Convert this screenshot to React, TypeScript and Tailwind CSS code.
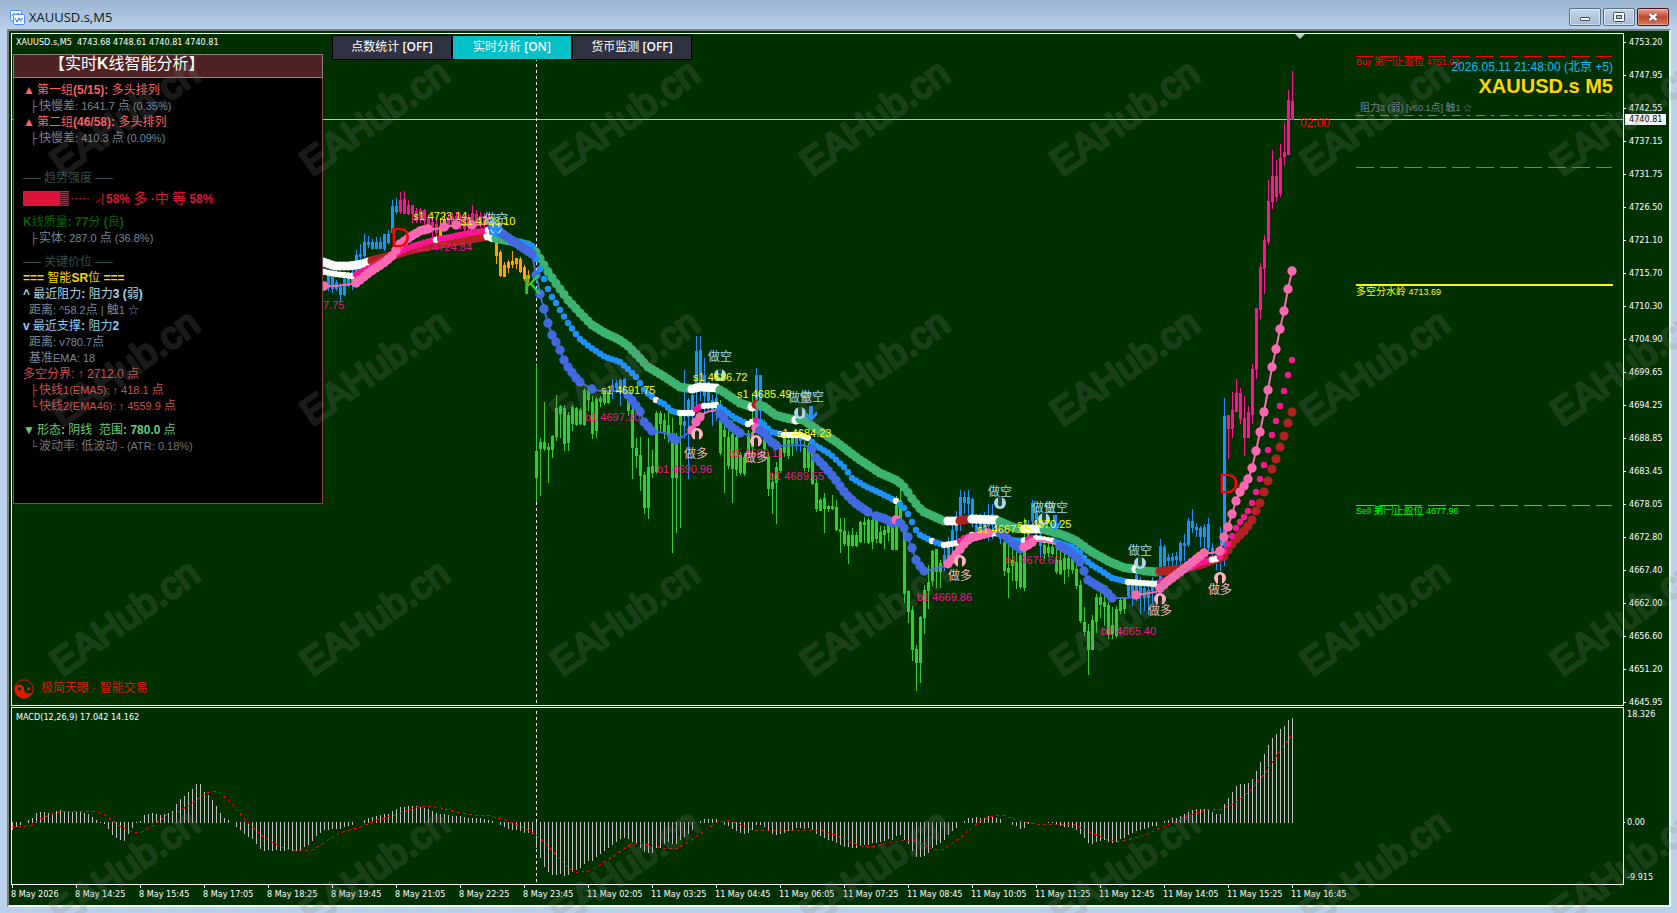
import React from 'react';

type Point = [number, number];
type Span = { to: number; color: string; dots?: boolean };
type Candle = [number, number, number, number];

const WHITE = '#ffffff';
const BLUE = '#1e90ff';
const PINK = '#ff1493';
const GREEN = '#32cd32';
const ORANGE = '#ffa500';
const SEA = '#3cb371';
const BRICK = '#b22222';
const ROYAL = '#4169e1';
const HOT = '#ff69b4';

const STEP = 4;
const ORIGIN_X = 12;

// [high, body top, body bottom, low], one bar every 4px
const candleRuns: { start: number; color: string; bars: Candle[] }[] = [
  {
    start: 79,
    color: BLUE,
    bars: [
      [275, 275, 287, 290], [277, 277, 288, 292], [280, 282, 288, 290], [283, 287, 294, 301], [276, 279, 294, 295],
      [274, 275, 285, 286], [270, 272, 282, 289], [250, 255, 280, 281], [244, 254, 256, 265], [234, 242, 255, 257],
      [236, 242, 244, 247], [239, 242, 248, 249], [237, 242, 248, 248], [237, 242, 248, 248], [234, 234, 248, 250],
      [230, 234, 242, 243], [200, 206, 232, 233], [198, 206, 211, 213],
    ],
  },
  {
    start: 97,
    color: PINK,
    bars: [
      [192, 200, 211, 213], [191, 199, 213, 213], [200, 205, 213, 214], [205, 205, 213, 222], [208, 211, 220, 222],
      [208, 210, 217, 222], [209, 210, 220, 224], [214, 217, 225, 230], [218, 222, 231, 236], [220, 224, 232, 236],
    ],
  },
  { start: 107, color: ORANGE, bars: [[218, 228, 235, 236], [214, 219, 224, 228]] },
  {
    start: 109,
    color: PINK,
    bars: [
      [214, 218, 224, 228], [213, 217, 222, 227], [212, 216, 222, 226], [214, 218, 224, 228], [216, 220, 228, 232],
      [214, 218, 226, 231], [205, 213, 222, 228], [210, 214, 222, 226], [212, 216, 222, 226], [213, 216, 222, 226],
      [214, 218, 224, 230],
    ],
  },
  {
    start: 121,
    color: ORANGE,
    bars: [
      [238, 240, 255, 263], [250, 252, 275, 276], [262, 265, 276, 276], [260, 262, 267, 272], [251, 261, 264, 267],
      [258, 258, 263, 268], [257, 259, 271, 272], [265, 267, 278, 280], [270, 275, 278, 282],
    ],
  },
  {
    start: 131,
    color: GREEN,
    bars: [
      [365, 451, 477, 501], [438, 442, 448, 495], [402, 442, 448, 450], [443, 447, 449, 482], [435, 436, 449, 457],
      [395, 408, 436, 440], [405, 406, 413, 437], [405, 408, 443, 450], [412, 415, 442, 450], [405, 407, 423, 430],
      [407, 408, 424, 425], [408, 410, 423, 424], [388, 390, 424, 425], [388, 390, 399, 410], [396, 402, 433, 438],
      [397, 399, 430, 437], [396, 398, 401, 406], [391, 392, 402, 404], [391, 392, 402, 403],
    ],
  },
  { start: 150, color: BLUE, bars: [[379, 385, 390, 398], [380, 383, 387, 392], [379, 380, 390, 405], [378, 379, 390, 397]] },
  {
    start: 154,
    color: GREEN,
    bars: [
      [392, 400, 410, 415], [408, 410, 447, 478], [438, 448, 455, 467], [437, 455, 475, 490], [472, 475, 507, 513],
      [438, 467, 507, 518], [450, 466, 472, 477], [411, 413, 471, 473], [411, 413, 423, 430], [413, 420, 432, 438],
      [410, 425, 435, 442], [418, 437, 477, 552], [433, 440, 477, 532], [412, 414, 424, 527],
    ],
  },
  {
    start: 168,
    color: BLUE,
    bars: [
      [370, 421, 425, 438], [398, 400, 416, 478], [385, 395, 410, 420], [336, 351, 390, 405], [336, 350, 385, 400],
      [358, 375, 395, 412], [381, 382, 400, 410], [395, 400, 410, 425], [393, 398, 410, 420],
    ],
  },
  {
    start: 177,
    color: GREEN,
    bars: [
      [400, 420, 452, 454], [425, 430, 436, 492], [430, 437, 465, 468], [420, 434, 468, 502], [430, 437, 469, 475],
      [452, 455, 472, 474], [453, 457, 473, 475], [430, 433, 450, 457], [393, 432, 446, 452],
    ],
  },
  { start: 186, color: BLUE, bars: [[368, 375, 418, 420], [375, 375, 410, 425]] },
  {
    start: 188,
    color: GREEN,
    bars: [
      [420, 430, 448, 458], [453, 457, 488, 495], [473, 482, 488, 513], [462, 467, 482, 523], [445, 448, 470, 472],
      [437, 438, 452, 456], [436, 440, 455, 458], [435, 438, 443, 455],
    ],
  },
  { start: 196, color: BLUE, bars: [[433, 437, 443, 450], [430, 434, 440, 451]] },
  {
    start: 198,
    color: GREEN,
    bars: [
      [440, 448, 467, 470], [443, 447, 467, 471], [450, 452, 483, 484], [476, 483, 508, 511], [498, 500, 510, 510],
      [493, 498, 508, 532], [505, 506, 508, 511], [495, 506, 508, 509], [500, 507, 529, 530], [518, 529, 531, 552],
      [518, 531, 543, 545], [531, 535, 545, 563], [528, 535, 545, 546], [532, 535, 545, 546], [521, 522, 541, 542],
      [517, 522, 524, 542], [518, 520, 542, 543], [519, 520, 541, 548], [519, 520, 538, 542], [526, 532, 542, 543],
      [526, 530, 534, 548], [521, 522, 532, 540], [519, 522, 549, 549], [496, 505, 549, 549], [488, 500, 520, 525],
      [521, 525, 593, 602], [590, 591, 611, 622], [606, 610, 649, 660], [645, 649, 662, 690], [616, 617, 662, 682],
      [585, 590, 617, 633], [565, 582, 590, 608], [550, 551, 580, 585], [549, 549, 571, 587], [560, 563, 571, 587],
    ],
  },
  {
    start: 233,
    color: BLUE,
    bars: [
      [546, 555, 563, 570], [537, 546, 560, 563], [525, 530, 545, 555], [511, 520, 530, 545], [490, 497, 520, 530],
      [491, 497, 502, 513], [490, 497, 503, 515], [498, 499, 522, 526], [520, 525, 530, 537], [514, 519, 530, 535],
      [512, 520, 530, 538], [504, 516, 525, 540], [504, 514, 524, 538], [515, 520, 530, 535], [524, 530, 538, 543],
    ],
  },
  {
    start: 248,
    color: GREEN,
    bars: [
      [540, 542, 570, 575], [545, 568, 572, 597], [548, 560, 565, 580], [552, 562, 580, 588], [552, 555, 586, 588],
      [518, 540, 587, 590],
    ],
  },
  { start: 254, color: BLUE, bars: [[520, 525, 537, 545], [500, 503, 520, 530], [505, 512, 525, 535], [525, 535, 545, 556]] },
  {
    start: 258,
    color: GREEN,
    bars: [
      [542, 545, 553, 558], [543, 547, 552, 556], [544, 547, 553, 554], [547, 560, 571, 573], [550, 560, 573, 574],
      [553, 558, 569, 583], [555, 558, 568, 576], [557, 559, 569, 573], [565, 569, 585, 588], [580, 585, 620, 622],
      [607, 622, 631, 635], [624, 631, 649, 674], [615, 620, 649, 649], [594, 597, 621, 632], [592, 597, 604, 617],
      [595, 602, 606, 625], [602, 605, 634, 638], [607, 625, 633, 638], [606, 609, 635, 637], [599, 600, 610, 613],
      [598, 599, 608, 613],
    ],
  },
  {
    start: 279,
    color: BLUE,
    bars: [
      [581, 583, 595, 598], [583, 585, 593, 605], [573, 575, 595, 600], [577, 580, 595, 613], [585, 588, 597, 610],
      [585, 590, 597, 614], [577, 580, 590, 603], [580, 583, 588, 600], [539, 546, 583, 590], [545, 547, 565, 570],
      [554, 557, 560, 570], [553, 557, 560, 568], [552, 556, 559, 570], [541, 543, 560, 566], [534, 543, 545, 560],
      [518, 521, 544, 546], [509, 521, 527, 532], [523, 527, 529, 536], [526, 528, 536, 546], [524, 527, 536, 550],
      [518, 524, 547, 553], [543, 548, 551, 556], [548, 553, 558, 569], [527, 550, 556, 570], [398, 416, 545, 565],
    ],
  },
  {
    start: 304,
    color: PINK,
    bars: [
      [415, 415, 428, 458], [392, 410, 428, 437], [379, 393, 411, 411], [388, 393, 418, 423], [396, 418, 437, 455],
      [406, 412, 437, 437], [364, 369, 414, 423], [308, 308, 369, 378], [263, 267, 309, 318], [235, 240, 268, 293],
      [180, 201, 241, 244], [150, 176, 201, 208], [160, 176, 196, 201], [144, 158, 193, 196], [123, 152, 156, 165],
      [90, 100, 154, 154], [71, 101, 119, 119],
    ],
  },
];

const slowLine: Point[] = [
  [320, 261], [335, 266], [350, 266], [362, 264], [374, 260], [390, 256], [410, 250], [430, 246], [460, 241], [488, 236],
  [493, 238], [510, 241], [528, 245], [536, 252], [541, 260], [550, 275], [560, 289], [568, 300], [580, 313], [592, 325],
  [605, 333], [618, 339], [627, 345], [637, 355], [648, 367], [665, 377], [680, 387], [692, 389], [700, 387], [716, 388],
  [722, 391], [740, 403], [752, 407], [757, 404], [765, 407], [775, 415], [790, 419], [796, 420], [802, 419], [815, 428],
  [835, 441], [860, 460], [880, 473], [898, 481], [905, 488], [913, 500], [922, 511], [935, 517], [944, 521], [958, 521],
  [970, 519], [997, 520], [1003, 523], [1015, 528], [1022, 529], [1042, 529], [1060, 534], [1075, 540], [1090, 551],
  [1110, 562], [1125, 568], [1136, 569], [1145, 571], [1157, 572], [1180, 569], [1200, 565], [1213, 560], [1220, 558],
  [1224, 556], [1232, 544], [1236, 539], [1240, 535], [1244, 531], [1248, 526], [1252, 520], [1256, 511], [1260, 503],
  [1264, 492], [1268, 481], [1272, 469], [1276, 459], [1280, 447], [1284, 436], [1288, 423], [1292, 412],
];

const slowSpans: Span[] = [
  { to: 369, color: WHITE }, { to: 487, color: BRICK }, { to: 493, color: WHITE }, { to: 690, color: SEA },
  { to: 718, color: WHITE }, { to: 749, color: SEA }, { to: 753, color: WHITE }, { to: 757, color: BRICK },
  { to: 793, color: SEA }, { to: 797, color: WHITE }, { to: 945, color: SEA }, { to: 957, color: WHITE },
  { to: 969, color: BRICK }, { to: 997, color: WHITE }, { to: 1021, color: SEA }, { to: 1041, color: WHITE },
  { to: 1133, color: SEA }, { to: 1137, color: WHITE }, { to: 1159, color: SEA }, { to: 1292, color: BRICK },
];

const midLine: Point[] = [
  [320, 271], [335, 274], [352, 276], [365, 270], [380, 262], [395, 254], [410, 247], [430, 241], [450, 237], [470, 233],
  [488, 230], [492, 232], [510, 239], [532, 246], [536, 259], [540, 269], [544, 279], [548, 289], [552, 297], [556, 303],
  [560, 310], [568, 323], [576, 334], [580, 339], [590, 347], [605, 357], [620, 362], [628, 369], [636, 377], [645, 391],
  [656, 400], [664, 404], [672, 411], [679, 413], [693, 413], [697, 408], [702, 406], [717, 405], [735, 418], [748, 424],
  [756, 420], [762, 423], [772, 432], [784, 435], [800, 435], [808, 438], [815, 445], [830, 454], [845, 468], [852, 478],
  [865, 486], [880, 493], [896, 501], [904, 508], [908, 514], [912, 522], [916, 530], [920, 535], [932, 541], [944, 545],
  [958, 543], [962, 539], [972, 535], [984, 534], [1000, 533], [1012, 540], [1022, 541], [1034, 538], [1054, 541],
  [1072, 547], [1080, 553], [1084, 558], [1090, 564], [1100, 570], [1112, 578], [1128, 582], [1157, 584], [1175, 575],
  [1190, 567], [1200, 563], [1210, 560], [1216, 559], [1220, 557], [1224, 551], [1228, 544], [1232, 536], [1236, 528],
  [1240, 522], [1244, 517], [1248, 511], [1252, 503], [1256, 492], [1260, 479], [1264, 465], [1268, 450], [1272, 435],
  [1276, 421], [1280, 406], [1284, 391], [1288, 375], [1292, 360],
];

const midSpans: Span[] = [
  { to: 353, color: WHITE }, { to: 433, color: PINK }, { to: 437, color: WHITE }, { to: 485, color: PINK },
  { to: 489, color: WHITE }, { to: 653, color: BLUE }, { to: 657, color: WHITE }, { to: 677, color: BLUE },
  { to: 693, color: WHITE }, { to: 701, color: PINK }, { to: 717, color: WHITE }, { to: 745, color: BLUE },
  { to: 753, color: WHITE }, { to: 757, color: PINK }, { to: 781, color: BLUE }, { to: 809, color: WHITE },
  { to: 893, color: BLUE }, { to: 897, color: WHITE }, { to: 929, color: BLUE }, { to: 933, color: WHITE },
  { to: 941, color: BLUE }, { to: 957, color: WHITE }, { to: 969, color: PINK }, { to: 973, color: WHITE },
  { to: 989, color: PINK }, { to: 1001, color: WHITE }, { to: 1021, color: BLUE }, { to: 1025, color: WHITE },
  { to: 1033, color: PINK }, { to: 1053, color: WHITE }, { to: 1125, color: BLUE }, { to: 1157, color: WHITE },
  { to: 1209, color: PINK }, { to: 1217, color: WHITE }, { to: 1292, color: PINK },
];

const fastLine: Point[] = [
  [320, 286], [336, 286], [352, 284], [356, 283], [370, 272], [385, 262], [392, 256], [400, 244], [410, 237], [420, 231],
  [427, 229], [436, 229], [444, 227], [456, 225], [472, 225], [488, 224], [496, 229], [510, 239], [520, 246], [532, 254],
  [536, 275], [540, 294], [544, 309], [548, 323], [552, 335], [556, 342], [560, 350], [564, 360], [568, 367], [576, 378],
  [580, 382], [592, 389], [600, 391], [620, 391], [628, 395], [634, 403], [641, 413], [644, 422], [652, 431], [666, 433],
  [676, 440], [684, 436], [692, 430], [696, 422], [700, 417], [706, 412], [717, 410], [724, 419], [730, 426], [740, 433],
  [752, 436], [756, 428], [764, 433], [770, 441], [777, 446], [805, 445], [812, 449], [815, 457], [825, 467], [835, 479],
  [845, 493], [855, 503], [868, 512], [876, 516], [886, 519], [892, 523], [897, 519], [904, 528], [908, 537], [912, 548],
  [916, 560], [920, 566], [924, 571], [935, 569], [946, 566], [955, 556], [964, 544], [970, 538], [988, 533], [996, 531],
  [1004, 535], [1012, 543], [1020, 549], [1028, 545], [1034, 541], [1045, 541], [1058, 545], [1072, 553], [1080, 562],
  [1084, 571], [1088, 580], [1096, 585], [1105, 590], [1112, 598], [1128, 598], [1136, 595], [1156, 592], [1168, 581],
  [1180, 572], [1195, 560], [1204, 553], [1212, 553], [1220, 551], [1224, 537], [1228, 527], [1232, 514], [1236, 501],
  [1240, 492], [1244, 486], [1248, 479], [1252, 468], [1256, 451], [1260, 432], [1264, 412], [1268, 390], [1272, 367],
  [1276, 349], [1280, 329], [1284, 311], [1288, 289], [1292, 271],
];

const fastSpans: Span[] = [
  { to: 325, color: HOT }, { to: 353, color: HOT, dots: false }, { to: 429, color: HOT },
  { to: 441, color: HOT, dots: false }, { to: 445, color: HOT }, { to: 453, color: HOT, dots: false },
  { to: 457, color: HOT }, { to: 469, color: HOT, dots: false }, { to: 473, color: HOT },
  { to: 489, color: HOT, dots: false }, { to: 581, color: ROYAL }, { to: 589, color: ROYAL, dots: false },
  { to: 593, color: ROYAL }, { to: 625, color: ROYAL, dots: false }, { to: 653, color: ROYAL },
  { to: 669, color: ROYAL, dots: false }, { to: 677, color: ROYAL }, { to: 689, color: ROYAL, dots: false },
  { to: 701, color: HOT }, { to: 717, color: HOT, dots: false }, { to: 741, color: ROYAL },
  { to: 753, color: ROYAL, dots: false }, { to: 757, color: HOT }, { to: 777, color: ROYAL },
  { to: 809, color: ROYAL, dots: false }, { to: 869, color: ROYAL }, { to: 873, color: ROYAL, dots: false },
  { to: 893, color: ROYAL }, { to: 897, color: HOT }, { to: 925, color: ROYAL },
  { to: 945, color: ROYAL, dots: false }, { to: 989, color: HOT }, { to: 999, color: HOT, dots: false },
  { to: 1021, color: ROYAL }, { to: 1033, color: HOT }, { to: 1057, color: HOT, dots: false },
  { to: 1113, color: ROYAL }, { to: 1133, color: ROYAL, dots: false }, { to: 1137, color: HOT },
  { to: 1157, color: HOT, dots: false }, { to: 1205, color: HOT }, { to: 1217, color: HOT, dots: false },
  { to: 1292, color: HOT },
];

const macdBars = [
  -8, -5, -3, 0, 3, 5, 10, 11, 11, 10, 9, 12, 13, 12, 11, 11, 12, 11, 10, 9, 6, 3, 1, -2, -7, -13, -16, -18, -19, -12,
  -6, -1, 2, 8, 9, 10, 9, 8, 9, 10, 12, 19, 24, 27, 31, 34, 39, 39, 31, 28, 23, 17, 10, 5, 3, 0, -5, -8, -12, -15, -17,
  -22, -27, -29, -28, -29, -28, -29, -29, -28, -29, -29, -28, -25, -23, -19, -14, -11, -8, -8, -7, -7, -7, -5, -4, -3,
  0, 0, 3, 5, 6, 7, 8, 9, 9, 12, 14, 16, 16, 17, 17, 17, 16, 15, 14, 12, 10, 9, 9, 8, 7, 7, 7, 6, 5, 5, 5, 5, 4, 3, 2,
  0, -3, -5, -7, -8, -8, -9, -11, -11, -12, -26, -36, -45, -50, -53, -53, -52, -54, -53, -50, -48, -46, -42, -39, -39,
  -35, -32, -29, -26, -23, -20, -17, -16, -17, -20, -22, -26, -30, -31, -31, -26, -26, -22, -20, -22, -22, -18, -15,
  -12, -8, 0, 2, 4, 4, 4, 4, 0, -3, -4, -7, -9, -11, -12, -11, -8, -3, -3, -5, -8, -12, -13, -12, -11, -9, -8, -6, -6,
  -7, -6, -8, -12, -14, -16, -18, -19, -21, -23, -25, -25, -26, -26, -24, -23, -23, -21, -21, -20, -19, -17, -18, -14,
  -13, -18, -22, -29, -35, -35, -34, -31, -26, -23, -21, -18, -13, -9, -6, 0, 2, 5, 5, 6, 5, 5, 7, 6, 5, 4, 0, 0, -3,
  -4, -7, -6, -2, 0, 0, 0, 0, -1, -1, -2, -4, -5, -5, -6, -8, -12, -16, -21, -22, -20, -19, -18, -20, -21, -20, -17,
  -16, -13, -11, -9, -8, -7, -6, -4, -4, 0, 2, 3, 5, 5, 7, 9, 11, 13, 14, 14, 14, 13, 11, 9, 9, 19, 25, 31, 37, 39, 39,
  40, 44, 52, 61, 69, 78, 85, 89, 94, 97, 103, 105,
];

const macdSignal: Point[] = [
  [12, 826], [20, 827], [32, 825], [40, 819], [55, 813], [68, 811], [95, 811], [105, 815], [120, 826], [132, 832],
  [142, 832], [155, 824], [167, 815], [180, 811], [195, 801], [203, 795], [212, 791], [220, 793], [232, 804], [250, 825],
  [265, 838], [280, 847], [296, 851], [312, 850], [325, 842], [340, 833], [360, 827], [375, 821], [395, 815], [418, 807],
  [432, 806], [445, 809], [460, 813], [475, 815], [490, 816], [505, 820], [520, 826], [532, 832], [545, 843], [560, 859],
  [570, 869], [577, 873], [588, 871], [600, 865], [615, 855], [630, 845], [640, 843], [652, 845], [665, 849], [678, 848],
  [690, 841], [703, 832], [716, 823], [728, 820], [740, 824], [752, 830], [775, 830], [795, 831], [822, 830], [835, 835],
  [850, 842], [862, 846], [875, 846], [890, 843], [903, 840], [915, 841], [930, 848], [940, 851], [952, 844], [965, 834],
  [980, 821], [990, 817], [1002, 815], [1020, 821], [1035, 824], [1045, 825], [1060, 824], [1075, 825], [1090, 832],
  [1105, 839], [1118, 842], [1135, 838], [1150, 833], [1165, 826], [1180, 820], [1195, 813], [1210, 809], [1222, 809],
  [1235, 803], [1250, 791], [1265, 773], [1280, 751], [1292, 735],
];

const prices = [
  '4753.20', '4747.95', '4742.55', '4737.15', '4731.75', '4726.50', '4721.10', '4715.70', '4710.30', '4704.90',
  '4699.65', '4694.25', '4688.85', '4683.45', '4678.05', '4672.80', '4667.40', '4662.00', '4656.60', '4651.20',
  '4645.95',
];

const times = [
  '8 May 2026', '8 May 14:25', '8 May 15:45', '8 May 17:05', '8 May 18:25', '8 May 19:45', '8 May 21:05',
  '8 May 22:25', '8 May 23:45', '11 May 02:05', '11 May 03:25', '11 May 04:45', '11 May 06:05', '11 May 07:25',
  '11 May 08:45', '11 May 10:05', '11 May 11:25', '11 May 12:45', '11 May 14:05', '11 May 15:25', '11 May 16:45',
];

const sellMarks: [number, number, string][] = [
  [413, 220, 's1 4723.14'], [461, 225, 's1 4723.10'], [601, 394, 's1 4691.75'], [693, 381, 's1 4686.72'],
  [737, 398, 's1 4685.49'], [777, 437, 's1 4684.23'], [977, 533, 's1 4667.65'], [1017, 528, 's1 4670.25'],
];

const buyMarks: [number, number, string][] = [
  [323, 309, '7.75'], [417, 251, 'b1 4724.84'], [585, 421, 'b1 4697.30'], [657, 473, 'b1 4690.96'],
  [729, 457, 'b1 4689.11'], [769, 480, 'b1 4689.55'], [917, 601, 'b1 4669.86'], [1005, 564, 'b1 4676.66'],
  [1101, 635, 'b1 4665.40'],
];

const shortLabels: Point[] = [[484, 223], [708, 361], [788, 402], [800, 401], [988, 496], [1032, 512], [1044, 512], [1128, 555]];
const longLabels: Point[] = [[684, 458], [744, 462], [948, 580], [1148, 615], [1208, 594]];
const shortDots: Point[] = [[496, 228], [720, 375], [800, 413], [1000, 503], [1044, 519], [1140, 563]];
const longDots: Point[] = [[697, 434], [756, 441], [960, 561], [1160, 599], [1220, 578]];
const blueArrows: Point[] = [[496, 227], [811, 414], [1055, 523]];

const CJK = /([\u3000-\u303f\u3200-\u32ff\u4e00-\u9fff\uff00-\uffef]+)/;

// Splits mixed text so the Chinese runs keep their own size
const Mixed = ({ text, cjk = 'text-xs font-normal' }: { text: string; cjk?: string }) => (
  <>
    {text.split(CJK).map((part, i) => (i % 2 ? <span key={i} className={cjk}>{part}</span> : part))}
  </>
);

const MixedSvg = ({ text }: { text: string }) => (
  <>
    {text.split(CJK).map((part, i) => (
      <tspan key={i} className={i % 2 ? 'text-[10px]' : 'text-[9px]'}>{part}</tspan>
    ))}
  </>
);

const valueAt = (line: Point[], x: number) => {
  const i = Math.max(1, line.findIndex(([px]) => px >= x));
  const [x0, y0] = line[i - 1];
  const [x1, y1] = line[i];
  return y0 + ((y1 - y0) * (x - x0)) / (x1 - x0);
};

const MovingAverage = ({ line, spans, radius, connect }: { line: Point[]; spans: Span[]; radius: number; connect?: boolean }) => {
  let x = 320;
  return (
    <>
      {spans.map((span) => {
        const points: Point[] = [];
        if (connect && x > 320) points.push([x - STEP, valueAt(line, x - STEP)]);
        const first = points.length;
        for (; x <= span.to; x += STEP) points.push([x, valueAt(line, x)]);
        return (
          <g key={span.to} fill={span.color}>
            {connect && (
              <polyline points={points.map((p) => p.join(',')).join(' ')} fill="none" stroke={span.color} strokeWidth={2} />
            )}
            {span.dots !== false &&
              points.slice(first).map(([px, py]) => <circle key={px} cx={px} cy={py} r={radius} />)}
          </g>
        );
      })}
    </>
  );
};

const PriceChart = () => (
  <svg className="block h-full w-full" aria-label="XAUUSD.s M5">
    <g transform="translate(-12 -34)" fontFamily='"Liberation Sans", "Noto Sans CJK SC", sans-serif'>
      <path d="M1295 34h10l-5 5z" fill="#c0c0c0" />
      <rect x={12} y={119} width={1611} height={1} fill="#c0c0c0" />
      <path d="M536.5 34V705" stroke="#fff" strokeDasharray="3 3" />
      <g shapeRendering="crispEdges">
        {candleRuns.map((run) => (
          <g key={run.start} fill={run.color}>
            {run.bars.map(([high, top, bottom, low], i) => {
              const x = ORIGIN_X + (run.start + i) * STEP;
              return (
                <g key={x}>
                  <rect x={x} y={high} width={1} height={low - high + 1} />
                  <rect x={x - 1} y={top} width={3} height={bottom - top + 1} />
                </g>
              );
            })}
          </g>
        ))}
      </g>
      <MovingAverage line={slowLine} spans={slowSpans} radius={4.6} />
      <MovingAverage line={midLine} spans={midSpans} radius={3.2} />
      <MovingAverage line={fastLine} spans={fastSpans} radius={4.7} connect />

      {shortDots.map(([x, y]) => (
        <g key={x}>
          <circle cx={x} cy={y} r={6} fill="#add8e6" />
          <path d={`M${x - 2} ${y - 6}h4v8l-2 2l-2 -2z`} fill="#1f4a38" />
        </g>
      ))}
      {longDots.map(([x, y]) => (
        <g key={x}>
          <circle cx={x} cy={y} r={6} fill="#ffb6c1" />
          <path d={`M${x - 2} ${y + 6}h4v-8l-2 -2l-2 2z`} fill="#1c2c10" />
        </g>
      ))}
      {blueArrows.map(([x, y]) => (
        <path key={x} d={`M${x - 2} ${y - 8}h4v9l4 -4v4l-6 7l-6 -7v-4l4 4z`} fill={BLUE} />
      ))}

      <g className="text-[11px]" fill="#f01490">
        {buyMarks.map(([x, y, label]) => <text key={label} x={x} y={y}>{label}</text>)}
      </g>
      <g className="text-[11px]" fill="#ffff00">
        {sellMarks.map(([x, y, label]) => <text key={label} x={x} y={y}>{label}</text>)}
      </g>
      <g className="text-xs" fill="#add8e6">
        {shortLabels.map(([x, y]) => <text key={x} x={x} y={y}>做空</text>)}
      </g>
      <g className="text-xs" fill="#ffb6c1">
        {longLabels.map(([x, y]) => <text key={x} x={x} y={y}>做多</text>)}
      </g>
      <g className="text-[28px]">
        <text x={390} y={247} fill="#ff0000">D</text>
        <text x={1218} y={493} fill="#ff0000">D</text>
        <text x={523} y={294} fill={GREEN}>K</text>
      </g>
      <text x={1300} y={127} className="text-xs" fill="#ff0000">02:00</text>

      <g shapeRendering="crispEdges">
        <path d="M1356 56.5H1612" stroke="#ff0000" strokeDasharray="18 6" />
        <path d="M1356 115.5H1612" stroke="#708090" strokeDasharray="9 6 3 6" />
        <path d="M1356 167.5H1612" stroke="#5f8298" strokeDasharray="18 6" />
        <path d="M1356 285H1613" stroke="#ffff00" strokeWidth={2} />
        <path d="M1356 505.5H1612" stroke="#00ff00" strokeDasharray="18 6" />
      </g>
      <text x={1356} y={65} fill="#ff0000"><MixedSvg text="Buy 第㈠止盈位 4751.03" /></text>
      <text x={1360} y={111} fill="#708090"><MixedSvg text="阻力3 (弱) [v60.1点] 触1 ☆" /></text>
      <text x={1356} y={295} fill="#ffff00"><MixedSvg text="多空分水岭 4713.69" /></text>
      <text x={1356} y={514} fill="#00ff00"><MixedSvg text="Sell 第㈠止盈位 4677.96" /></text>
    </g>
  </svg>
);

const MacdChart = () => (
  <svg className="block h-full w-full" aria-label="MACD">
    <g transform="translate(-12 -708)">
      <path d="M536.5 711V884" stroke="#fff" strokeDasharray="3 3" />
      <g fill="#c0c0c0" shapeRendering="crispEdges">
        {macdBars.map((value, i) => (
          <rect key={i} x={ORIGIN_X + i * STEP} y={value > 0 ? 823 - value : 822} width={1} height={Math.abs(value)} />
        ))}
      </g>
      <polyline
        points={macdSignal.map((p) => p.join(',')).join(' ')}
        fill="none"
        stroke="#ff0000"
        strokeDasharray="3 3"
        shapeRendering="crispEdges"
      />
    </g>
  </svg>
);

const Row = ({ text, className }: { text: string; className: string }) => (
  <p className={`h-4 leading-4 whitespace-pre ${className}`}>
    <Mixed text={text} />
  </p>
);

const SubRow = ({ mark, text, className }: { mark?: string; text: string; className: string }) => (
  <p className={`flex h-4 text-[11px] leading-4 whitespace-pre ${className}`}>
    <span className={mark ? 'w-4 pl-[7px]' : 'w-[6px]'}>{mark}</span>
    <span><Mixed text={text} /></span>
  </p>
);

const AnalysisPanel = () => (
  <section className="absolute top-5 left-px h-[450px] w-[310px] border border-[#8b4545] bg-black font-['Liberation_Sans','Noto_Sans_CJK_SC',sans-serif]">
    <h2 className="-mx-px -mt-px h-6 border border-[#8c8080] bg-[#4f2323] pl-[35px] text-base leading-[18px] font-bold text-white">
      <Mixed text="【实时K线智能分析】" cjk="font-normal" />
    </h2>
    <div className="px-[9px] pt-1">
      <p className="flex h-4 text-xs leading-4 font-bold text-[#ff6060]">
        <span className="w-[14px]">▲</span>
        <span><Mixed text="第一组(5/15): 多头排列" /></span>
      </p>
      <SubRow mark="├" text="快慢差: 1641.7 点 (0.35%)" className="text-[#778899]" />
      <p className="flex h-4 text-xs leading-4 font-bold text-[#ff6060]">
        <span className="w-[14px]">▲</span>
        <span><Mixed text="第二组(46/58): 多头排列" /></span>
      </p>
      <SubRow mark="├" text="快慢差: 410.3 点 (0.09%)" className="text-[#778899]" />

      <div className="mt-6 flex h-4 items-center gap-[3px] text-[#2f4f4f]">
        <span className="h-px w-[18px] bg-current" />
        <h3 className="text-xs leading-4">趋势强度</h3>
        <span className="h-px w-[18px] bg-current" />
      </div>
      <div className="mt-1 flex h-4 items-center text-xs font-bold text-[#dc143c]">
        <span className="h-[15px] w-[37px] bg-current" />
        <span className="h-[15px] w-[9px] bg-[repeating-linear-gradient(0deg,#dc143c_0_1px,#50101c_1px_2px)]" />
        <span className="w-[26px] pl-px leading-4 font-normal">·····</span>
        <span className="w-[11px] leading-4 font-normal">⸝|</span>
        <span className="leading-4 whitespace-pre"><Mixed text="58% 多 ·中 等 58%" cjk="text-sm leading-4 font-normal" /></span>
      </div>

      <Row text="K线质量: 77分 (良)" className="mt-2 text-xs font-bold text-[#006400]" />
      <SubRow mark="├" text="实体: 287.0 点 (36.8%)" className="text-[#778899]" />

      <div className="mt-2 flex h-4 items-center gap-[3px] text-[#2f4f4f]">
        <span className="h-px w-[18px] bg-current" />
        <h3 className="text-xs leading-4">关键价位</h3>
        <span className="h-px w-[18px] bg-current" />
      </div>
      <Row text="=== 智能SR位 ===" className="text-xs font-bold text-[#ffd700]" />
      <Row text="^ 最近阻力: 阻力3 (弱)" className="text-xs font-bold text-[#add8e6]" />
      <SubRow text="距离: ^58.2点 | 触1 ☆" className="text-[#778899]" />
      <Row text="v 最近支撑: 阻力2" className="text-xs font-bold text-[#87cefa]" />
      <SubRow text="距离: v780.7点" className="text-[#778899]" />
      <SubRow text="基准EMA: 18" className="text-[#778899]" />
      <Row text="多空分界: ↑ 2712.0 点" className="text-xs text-[#cd5050]" />
      <SubRow mark="├" text="快线1(EMA5): ↑ 418.1 点" className="text-[#cd5050]" />
      <SubRow mark="└" text="快线2(EMA46): ↑ 4559.9 点" className="text-[#cd5050]" />

      <p className="mt-2 flex h-4 text-xs leading-4 font-bold text-[#66cd7a]">
        <span className="w-[14px]">▼</span>
        <span className="whitespace-pre"><Mixed text="形态: 阴线  范围: 780.0 点" /></span>
      </p>
      <SubRow mark="└" text="波动率: 低波动 - (ATR: 0.18%)" className="text-[#777777]" />
    </div>
  </section>
);

const ModeButtons = () => (
  <div className="absolute top-px left-[320px] flex">
    {[
      { label: '点数统计', state: 'OFF' },
      { label: '实时分析', state: 'ON' },
      { label: '货币监测', state: 'OFF' },
    ].map(({ label, state }) => (
      <button
        key={label}
        type="button"
        className={`h-[25px] w-[120px] border border-black pb-px font-['Open_Sans','Noto_Sans_CJK_SC',sans-serif] text-xs leading-[22px] text-white ${
          state === 'ON' ? 'bg-[#00c0c8]' : 'bg-[#2f3241]'
        }`}
      >
        {label} <span className="font-semibold">[{state}]</span>
      </button>
    ))}
  </div>
);

const Brand = () => (
  <div className="absolute bottom-[6px] left-[2px] flex items-center gap-[7px] font-['Liberation_Sans','Noto_Sans_CJK_SC',sans-serif] text-xs leading-4 text-[#dd1b00]">
    <svg className="size-5" viewBox="0 0 20 20">
      <circle cx="10" cy="10" r="9.2" fill="none" stroke="currentColor" />
      <path d="M.8 10a4.6 4.6 0 0 1 9.2 0a4.6 4.6 0 0 0 9.2 0a9.2 9.2 0 0 1 -18.4 0z" fill="currentColor" />
      <circle cx="5.6" cy="9.8" r="1.6" fill="#003000" />
      <circle cx="14.6" cy="9.8" r="1.6" fill="currentColor" />
    </svg>
    <span className="pb-[2px]">极简天眼 · 智能交易</span>
  </div>
);

const PriceScale = () => (
  <div className="relative w-[45px] shrink-0 pt-[3px]">
    {prices.map((price) => (
      <div key={price} className="flex h-[33px] items-start last:h-3">
        <span className="mt-[6px] mr-[3px] h-px w-[2px] bg-white" />
        <span className="leading-3">{price}</span>
      </div>
    ))}
    <span className="absolute top-[81px] left-px w-[41px] bg-white pl-1 leading-[11px] text-black">4740.81</span>
  </div>
);

const MacdScale = () => (
  <div className="flex w-[45px] shrink-0 flex-col pt-px pb-[2px]">
    <span className="pl-[3px] leading-3">18.326</span>
    <div className="mt-[96px] flex items-center gap-[2px]">
      <span className="h-px w-px bg-white" />
      <span className="leading-3">0.00</span>
    </div>
    <span className="mt-auto pl-[3px] leading-3">-9.915</span>
  </div>
);

const TimeScale = () => (
  <div className="flex h-5 overflow-hidden">
    {times.map((time) => (
      <div key={time} className="flex w-16 shrink-0 flex-col whitespace-nowrap">
        <span className="ml-px h-[3px] w-px bg-white" />
        <span className="leading-3">{time}</span>
      </div>
    ))}
  </div>
);

const windowButton =
  'flex h-[18px] w-8 items-center justify-center rounded-[2px] border border-[#5b6f87] bg-linear-to-b from-[#c6d6e8] via-[#b4c8de] via-50% to-[#a3bdd8] shadow-[inset_0_0_0_1px_rgba(255,255,255,0.5)]';

const TitleBar = () => (
  <header className="flex h-[29px] shrink-0 items-center bg-linear-to-b from-[#9bb4d0] to-[#b9d1ea] pt-[5px] pr-2 pl-[10px]">
    <svg className="mr-1 size-[15px]" viewBox="0 0 15 15">
      <rect x=".5" y=".5" width="11" height="10" rx="1" fill="#eef5ff" stroke="#4a8be8" />
      <path d="M2 6l2-3 2 2 2-2 2 2" fill="none" stroke="#4a8be8" />
      <rect x="3.5" y="4.5" width="11" height="10" rx="1" fill="#f4f9ff" stroke="#4a8be8" />
      <path d="M5 8l2 4 2-4 1.500 3 2-3" fill="none" stroke="#2f6fd8" />
    </svg>
    <h1 className="flex-1 font-['Open_Sans',sans-serif] text-[13px] leading-4 text-[#10161e]">XAUUSD.s,M5</h1>
    <div className="flex gap-[2px]">
      <button type="button" aria-label="Minimize" className={windowButton}>
        <span className="mt-1 h-1 w-[10px] rounded-[1px] border border-[#4a4f58] bg-white" />
      </button>
      <button type="button" aria-label="Maximize" className={windowButton}>
        <svg className="h-[10px] w-3" viewBox="0 0 12 10">
          <rect x=".5" y=".5" width="11" height="9" rx="1" fill="#fff" stroke="#4a4f58" />
          <rect x="3.500" y="3.500" width="5" height="3" fill="#a9c0da" stroke="#4a4f58" />
        </svg>
      </button>
      <button
        type="button"
        aria-label="Close"
        className="flex h-[18px] w-8 items-center justify-center rounded-[2px] border border-[#4a1518] bg-linear-to-b from-[#e5a294] via-[#c0442c] via-50% to-[#d77a62] shadow-[inset_0_0_0_1px_rgba(255,255,255,0.3)]"
      >
        <svg className="h-[10px] w-3" viewBox="0 0 12 10">
          <path d="M2.500 2l7 6M9.500 2l-7 6" stroke="#4a4f58" strokeWidth="4" />
          <path d="M2.500 2l7 6M9.500 2l-7 6" stroke="#fff" strokeWidth="2.400" />
        </svg>
      </button>
    </div>
  </header>
);

const Watermark = () => (
  <svg className="pointer-events-none absolute inset-0 h-full w-full" aria-hidden="true">
    <defs>
      <pattern id="mark" width="250" height="250" patternUnits="userSpaceOnUse">
        <text
          transform="translate(62 177) rotate(-35)"
          className="font-['Liberation_Sans',sans-serif] text-[38px]"
          fill="#808080"
          stroke="#808080"
          strokeWidth="3"
          strokeLinejoin="round"
        >
          EAHub.cn
        </text>
      </pattern>
    </defs>
    <rect width="100%" height="100%" fill="url(#mark)" opacity="0.2" />
  </svg>
);

export default function App() {
  return (
    <div className="relative flex h-screen flex-col overflow-hidden bg-[#b9d1ea]">
      <TitleBar />
      <main className="mr-[6px] mb-[6px] ml-[7px] flex min-h-0 flex-1 flex-col border-2 border-t-[#7f7f7f] border-r-[#f4f4f4] border-b-[#f4f4f4] border-l-[#7f7f7f] bg-[#003000] pt-[2px] pl-[2px] font-['DejaVu_Sans_Condensed','Open_Sans',sans-serif] text-[9px] text-white">
        <div className="flex min-h-0 flex-1">
          <div className="relative min-w-0 flex-1 border border-white">
            <PriceChart />
            <p className="absolute top-[2px] left-1 leading-3 whitespace-pre">XAUUSD.s,M5  4743.68 4748.61 4740.81 4740.81</p>
            <AnalysisPanel />
            <ModeButtons />
            <div className="absolute top-[25px] right-[10px] text-right font-['Liberation_Sans','Noto_Sans_CJK_SC',sans-serif]">
              <p className="text-xs leading-4 text-[#00bfff]">2026.05.11 21:48:00 (北京 +5)</p>
              <p className="text-xl leading-[22px] font-bold text-[#ffd700]">XAUUSD.s M5</p>
            </div>
            <Brand />
          </div>
          <PriceScale />
        </div>
        <div className="mt-px flex h-[178px] shrink-0">
          <div className="relative min-w-0 flex-1 border border-white">
            <MacdChart />
            <p className="absolute top-[3px] left-1 leading-3">MACD(12,26,9) 17.042 14.162</p>
          </div>
          <MacdScale />
        </div>
        <TimeScale />
      </main>
      <Watermark />
    </div>
  );
}
